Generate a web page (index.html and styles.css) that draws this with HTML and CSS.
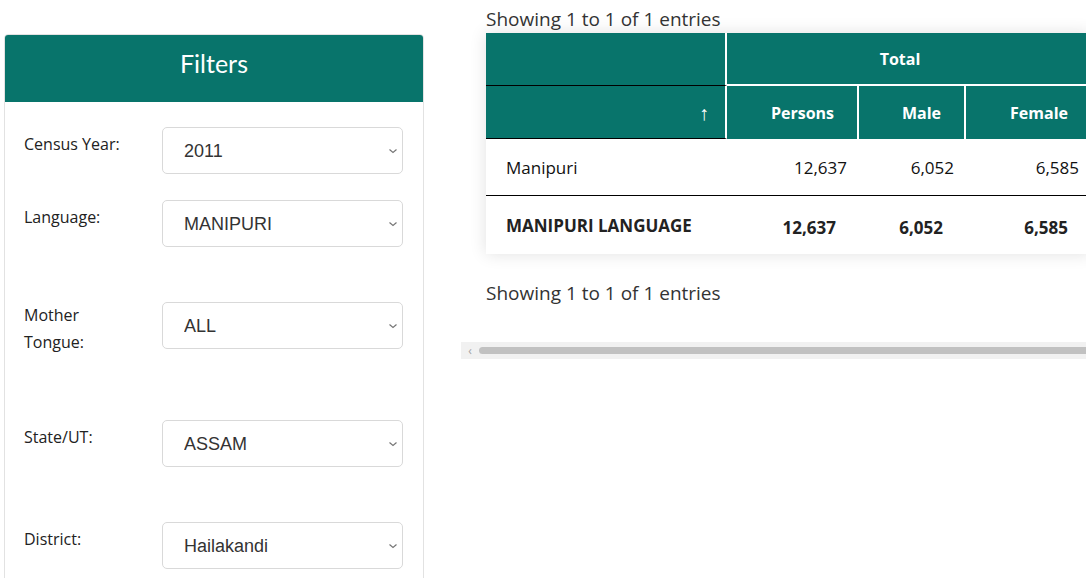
FILE: index.html
```html
<!DOCTYPE html>
<html>
<head>
    <title>Mother Tongue Data</title>
    <link rel="stylesheet" href="styles.css">
</head>
<body>
    <div class="page">
        <div class="filters">
            <div class="filters-head">Filters</div>
            <form class="filters-body">
                <div class="field">
                    <label>Census Year:</label>
                    <select name="year"><option>2011</option></select>
                </div>
                <div class="field field-wide">
                    <label>Language:</label>
                    <select name="language"><option>MANIPURI</option></select>
                </div>
                <div class="field field-tall">
                    <label>Mother<br>Tongue:</label>
                    <select name="tongue"><option>ALL</option></select>
                </div>
                <div class="field field-wide">
                    <label>State/UT:</label>
                    <select name="state"><option>ASSAM</option></select>
                </div>
                <div class="field">
                    <label>District:</label>
                    <select name="district"><option>Hailakandi</option></select>
                </div>
            </form>
        </div>

        <div class="results">
            <div class="info">Showing 1 to 1 of 1 entries</div>
            <table class="data">
                <colgroup>
                    <col class="c-name">
                    <col class="c-persons">
                    <col class="c-male">
                    <col class="c-female">
                </colgroup>
                <thead>
                    <tr>
                        <th class="name-col"></th>
                        <th colspan="3" class="group">Total</th>
                    </tr>
                    <tr>
                        <th class="name-col sort">&#8593;</th>
                        <th class="num sep">Persons</th>
                        <th class="num sep">Male</th>
                        <th class="num">Female</th>
                    </tr>
                </thead>
                <tbody>
                    <tr>
                        <td>Manipuri</td>
                        <td class="num">12,637</td>
                        <td class="num">6,052</td>
                        <td class="num">6,585</td>
                    </tr>
                </tbody>
                <tfoot>
                    <tr>
                        <td>MANIPURI LANGUAGE</td>
                        <td class="num">12,637</td>
                        <td class="num">6,052</td>
                        <td class="num">6,585</td>
                    </tr>
                </tfoot>
            </table>
            <div class="info info-bottom">Showing 1 to 1 of 1 entries</div>
            <div class="scrollbar">
                <span class="scroll-arrow">&#8249;</span>
                <div class="scroll-thumb"></div>
            </div>
        </div>
    </div>
</body>
</html>
```

FILE: styles.css
```css
body { margin: 0; font-family: "Open Sans", "Noto Sans", sans-serif; color: #222; background: #fff; overflow: hidden; }
.page { display: flex; align-items: flex-start; }

.filters { width: 418px; margin: 34px 0 0 4px; border: 1px solid #e2e2e2; border-radius: 4px; height: 600px; }
.filters-head { height: 67px; background: #08746b; color: #fff; font-family: Lato, sans-serif; font-size: 25px; text-align: center; line-height: 56px; border-radius: 3px 3px 0 0; }
.filters-body { padding: 25px 19px 0 19px; }
.field { display: grid; grid-template-columns: 138px 241px; align-items: start; margin-bottom: 26px; }
.field-wide { margin-bottom: 55px; }
.field-tall { margin-bottom: 64px; }
.field label { font-size: 16px; line-height: 27px; padding-top: 4px; color: #222; }
.field-tall label { padding-top: 0; }
.field select { height: 47px; border: 1px solid #d9d9d9; border-radius: 5px; padding: 0 21px; font-family: "Liberation Sans", Arial, sans-serif; font-size: 18px; color: #333; background: #fff url("data:image/svg+xml,%3Csvg xmlns='http://www.w3.org/2000/svg' width='10' height='6' viewBox='0 0 10 6'%3E%3Cpath d='M1.5 1.5l3.5 3 3.5-3' fill='none' stroke='%23777' stroke-width='1.2'/%3E%3C/svg%3E") no-repeat right 4px center; appearance: none; -webkit-appearance: none; }

.results { flex: 1; margin-left: 37px; overflow: hidden; }
.info { padding-left: 25px; font-size: 19px; line-height: 30px; color: #333; margin-top: 4px; }
.info-bottom { margin-top: 24px; }

.data { margin: -1px 0 0 25px; border-collapse: separate; border-spacing: 0; box-shadow: 0 0 16px rgba(0, 0, 0, 0.12); font-size: 17px; width: 605px; table-layout: fixed; }
.data .c-name { width: 241px; }
.data .c-persons { width: 132px; }
.data .c-male { width: 107px; }
.data .c-female { width: 125px; }
.data th, .data td { box-sizing: border-box; }
.data th { background: #08746b; color: #fff; font-weight: bold; font-size: 16px; height: 53px; padding: 0; }
.data .name-col { border-right: 2px solid #fff; border-bottom: 1px solid #000; }
.data .group { border-bottom: 2px solid #fff; padding-right: 18px; }
.data .sort { text-align: right; padding-right: 16px; font-weight: normal; font-size: 20px; }
.data th.num { text-align: right; padding-right: 23px; }
.data th.sep { border-right: 2px solid #fff; }
.data td { height: 57px; padding: 0 12px 0 20px; color: #111; }
.data td.num { text-align: right; }
.data tbody td { border-bottom: 1px solid #000; }
.data tfoot td { font-weight: bold; height: 58px; color: #222; font-size: 17px; }
.data tfoot td.num { padding-right: 23px; padding-top: 5px; }

.scrollbar { display: flex; align-items: center; height: 17px; margin-top: 34px; background: #f1f1f1; }
.scroll-arrow { width: 18px; text-align: center; color: #a3a3a3; font-size: 12px; line-height: 17px; }
.scroll-thumb { flex: 1; height: 7px; background: #c1c1c1; border-radius: 4px 0 0 4px; }
```
